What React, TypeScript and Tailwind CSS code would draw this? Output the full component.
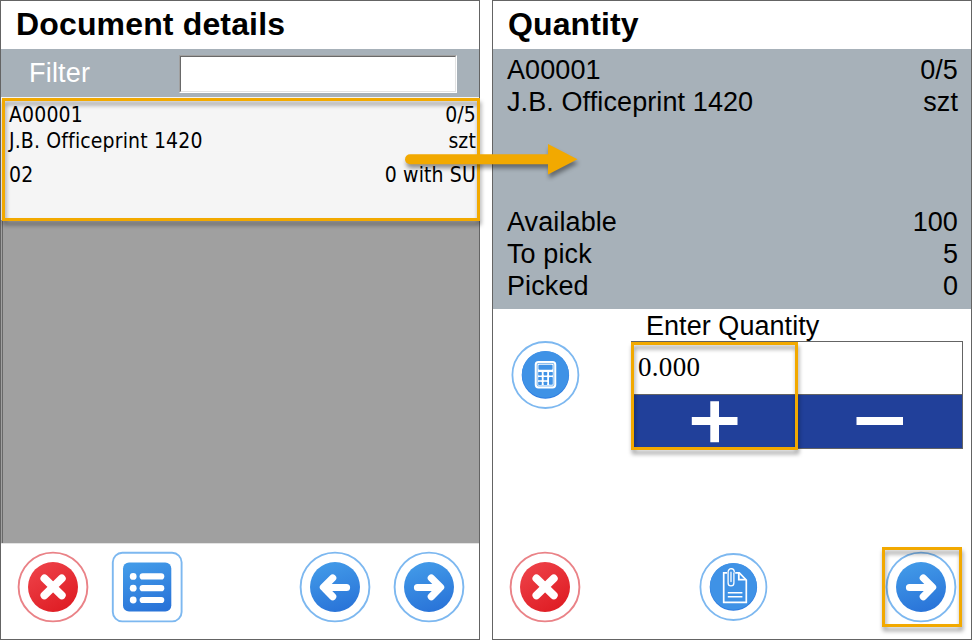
import type { ReactNode } from 'react';

const sans = 'font-["Liberation_Sans",Arial,sans-serif]';

function Row({ left, right, className = '' }: { left: string; right: string; className?: string }) {
  return (
    <div className={`flex justify-between whitespace-pre ${className}`}>
      <span>{left}</span>
      <span>{right}</span>
    </div>
  );
}

function Icon({ label, children }: { label: string; children: ReactNode }) {
  return (
    <button aria-label={label} className="block size-[72px] shrink-0">
      <svg width="72" height="72" viewBox="-36 -36 72 72" fill="none">
        <defs>
          <linearGradient id="blue" x1="0.35" y1="0" x2="0.65" y2="1">
            <stop stopColor="#429ae8" />
            <stop offset="1" stopColor="#2973d8" />
          </linearGradient>
          <linearGradient id="red" x1="0.2" y1="0" x2="0.8" y2="1">
            <stop stopColor="#ee4249" />
            <stop offset="1" stopColor="#de1b22" />
          </linearGradient>
        </defs>
        {children}
      </svg>
    </button>
  );
}

function CancelIcon() {
  return (
    <Icon label="Cancel">
      <circle r="34.4" stroke="#ea8287" strokeWidth="1.9" />
      <circle r="25" fill="url(#red)" />
      <path d="M-8.6-8.6 8.8 8.4M8.8-8.6-8.6 8.4" stroke="#fff" strokeWidth="7.8" strokeLinecap="round" />
    </Icon>
  );
}

function ArrowIcon({ back = false }: { back?: boolean }) {
  return (
    <Icon label={back ? 'Back' : 'Next'}>
      <circle r="34.4" stroke="#7db8f0" strokeWidth="1.9" />
      <circle r="25" fill="url(#blue)" />
      <path
        d={back ? 'M11.5.5H-11M-2.3-9-11.6.3-2.3 9.6' : 'M-11.5.5H11M2.3-9 11.6.3 2.3 9.6'}
        stroke="#fff"
        strokeWidth="7.2"
        strokeLinecap="round"
        strokeLinejoin="round"
      />
    </Icon>
  );
}

function ListIcon() {
  return (
    <Icon label="List">
      <rect x="-34.2" y="-34.2" width="68.8" height="68.6" rx="9.5" stroke="#7db8f0" strokeWidth="1.9" />
      <rect x="-24" y="-24.6" width="48.3" height="49.2" rx="6" fill="url(#blue)" />
      {[-10.6, 1.2, 13].map((y) => (
        <g key={y}>
          <circle cx="-13.8" cy={y} r="3.4" fill="#fff" />
          <path d={`M-4.3 ${y}H14.2`} stroke="#fff" strokeWidth="6.2" strokeLinecap="round" />
        </g>
      ))}
    </Icon>
  );
}

function CalculatorIcon() {
  return (
    <Icon label="Calculator">
      <circle cx=".4" r="33" stroke="#7db8f0" strokeWidth="1.8" />
      <circle cx=".4" r="23.7" fill="#2d7be0" />
      <circle cx=".4" r="23.4" cy="-0.7" fill="#3f92e6" />
      <rect x="-9.2" y="-13" width="19.4" height="25.4" rx="2.6" stroke="#fff" strokeWidth="2.1" />
      <rect x="-7.6" y="-11.3" width="16.2" height="22" rx="1" fill="#fff" />
      <rect x="-7.9" y="-11.6" width="16.8" height="22.6" rx="1.4" stroke="#a5cdf4" strokeWidth=".6" />
      <g fill="#3f92e6">
        <rect x="-6.6" y="-10.2" width="14.2" height="5" rx="1" />
        <rect x="-6.8" y="-3" width="3.6" height="3.4" rx=".6" />
        <rect x="-1.4" y="-3" width="3.6" height="3.4" rx=".6" />
        <rect x="4" y="-3" width="3.8" height="3.4" rx=".6" />
        <rect x="-6.8" y="2" width="3.6" height="3.3" rx=".6" />
        <rect x="-1.4" y="2" width="3.6" height="3.3" rx=".6" />
        <rect x="4" y="2" width="3.8" height="7.8" rx=".8" />
        <rect x="-6.8" y="6.7" width="3.6" height="3.2" rx=".6" />
        <rect x="-1.4" y="6.7" width="3.6" height="3.2" rx=".6" />
      </g>
    </Icon>
  );
}

function AttachmentIcon() {
  return (
    <Icon label="Attachments">
      <circle cx=".4" r="33" stroke="#7db8f0" strokeWidth="1.8" />
      <circle cx=".4" r="23.7" fill="#2d7be0" />
      <circle cx=".4" r="23.4" cy="-0.7" fill="#3f92e6" />
      <path d="M-6-14.2H-9.3V15.3H13.3V-7L6.3-14.2H2.2" stroke="#fff" strokeWidth="1.7" />
      <path d="M5.8-14V-7.4H13" stroke="#fff" strokeWidth="1.8" />
      <path d="M-5.2 5.8H9.4M-5.2 9.8H9.4" stroke="#fff" strokeWidth="1.5" />
      <path
        d="M.9-14.2V-4a2.9 2.9 0 0 1-5.8 0V-14.8a3.3 3.3 0 0 1 3.2-3.6 3.3 3.3 0 0 1 3 3.2M-2-14.8V-5.5"
        stroke="#fff"
        strokeWidth="1.3"
        strokeLinecap="round"
      />
    </Icon>
  );
}

function Highlight({ className }: { className: string }) {
  return (
    <div
      className={`pointer-events-none absolute z-10 border-3 border-[#f2a900] drop-shadow-[1px_4px_2px_rgba(0,0,0,0.4)] ${className}`}
    />
  );
}

function DetailsPanel() {
  return (
    <section className="flex w-[480px] flex-col border border-[#646464] bg-white">
      <h1 className="h-12 pl-[15px] text-[32px] leading-[47px] font-bold tracking-[0.15px]">Document details</h1>
      <div className="flex h-12 items-start bg-[#a7b1b9] pt-1.5 pr-[22px] pl-[28px]">
        <label className="w-[150px] text-[27px] leading-[36px] tracking-[0.2px] text-white">Filter</label>
        <div className="h-[38px] w-[278px] border-t border-r border-b border-l border-t-[#a0a0a0] border-r-white border-b-white border-l-[#a0a0a0]">
          <div className="size-full border border-t-[#696969] border-r-[#e3e3e3] border-b-[#e3e3e3] border-l-[#696969] bg-white" />
        </div>
      </div>
      <div className="flex h-[447px] flex-col border-b border-b-[#e3e3e3] bg-[#a0a0a0]">
        <div className='relative h-[123px] bg-[#f5f5f5] pt-[5px] pr-[3px] pl-2 font-["DejaVu_Sans_Condensed","Noto_Sans",sans-serif] text-[21px] leading-[26px] tracking-[0.15px] [font-variant-ligatures:none]'>
          <Row left="A00001" right="0/5" />
          <Row left="J.B. Officeprint 1420" right="szt" />
          <Row left="02" right="0 with SU" className="mt-2" />
          <Highlight className="top-[1px] left-[1px] h-[123px] w-[478px]" />
        </div>
        <div className="ml-px flex-1 border-l border-[#696969]" />
      </div>
      <footer className="flex flex-1 pt-[7px] pl-4">
        <CancelIcon />
        <div className="ml-[22px]">
          <ListIcon />
        </div>
        <div className="ml-[116px]">
          <ArrowIcon back />
        </div>
        <div className="ml-[22px]">
          <ArrowIcon />
        </div>
      </footer>
    </section>
  );
}

function QuantityPanel() {
  return (
    <section className="flex w-[480px] flex-col border border-[#646464] bg-white">
      <h1 className="h-12 pl-[15px] text-[32px] leading-[47px] font-bold tracking-[0.1px]">Quantity</h1>
      <div className="h-[260px] bg-[#a7b1b9] pt-[5px] pr-[13px] pl-[14px] text-[27px] leading-8 tracking-[0.1px]">
        <Row left="A00001" right="0/5" />
        <Row left="J.B. Officeprint 1420" right="szt" />
        <Row left="Available" right="100" className="mt-[88px]" />
        <Row left="To pick" right="5" />
        <Row left="Picked" right="0" />
      </div>
      <div className="flex h-[234px]">
        <div className="pt-[30px] pl-4">
          <CalculatorIcon />
        </div>
        <div className="relative ml-[50px] w-[332px]">
          <div className="h-8 pl-[15px] text-[27px] leading-[34px] tracking-[0.05px]">Enter Quantity</div>
          <div className="h-[108px] border border-[#646464]">
            <div className='h-[53px] border-b border-[#646464] pl-1.5 font-["Liberation_Serif",serif] text-[27px] leading-[50px] tracking-[0.3px]'>
              0.000
            </div>
            <div className="grid h-[53px] grid-cols-[165px_1fr] bg-[#21409a]">
              <button aria-label="Increase" className="pl-[59px]">
                <svg width="48" height="53" fill="#fff">
                  <path d="M19.3 6.3H28V22h18.5v8H28v17.3h-8.7V30H.8v-8h18.5Z" />
                </svg>
              </button>
              <button aria-label="Decrease" className="pl-[59px]">
                <svg width="48" height="53" fill="#fff">
                  <path d="M.5 22H47v8H.5Z" />
                </svg>
              </button>
            </div>
          </div>
          <Highlight className="top-[33px] left-0 h-[108px] w-[167px]" />
        </div>
      </div>
      <footer className="flex flex-1 pt-2 pl-4">
        <CancelIcon />
        <div className="ml-[116px]">
          <AttachmentIcon />
        </div>
        <div className="relative ml-[116px]">
          <ArrowIcon />
          <Highlight className="-top-1 -left-[3px] size-20" />
        </div>
      </footer>
    </section>
  );
}

export default function App() {
  return (
    <main className={`relative flex h-[640px] w-[972px] gap-3 overflow-hidden bg-white text-black ${sans}`}>
      <DetailsPanel />
      <QuantityPanel />
      <svg
        className="pointer-events-none absolute top-[140px] left-[400px] z-20 drop-shadow-[1px_4px_2px_rgba(0,0,0,0.4)]"
        width="184"
        height="48"
      >
        <path d="M10 19.2H150" stroke="#f2a900" strokeWidth="10" strokeLinecap="round" />
        <path d="M148 4 177.500 19.200 148 34.500Z" fill="#f2a900" />
      </svg>
    </main>
  );
}
